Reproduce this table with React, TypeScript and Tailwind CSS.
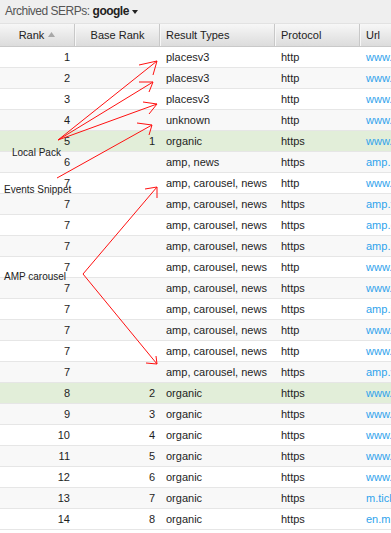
import React from "react";

type Row = {
  rank: number;
  base?: number;
  types: string;
  proto: string;
  url: string;
  hl?: boolean;
};

const AMP = "amp, carousel, news";

const rows: Row[] = [
  { rank: 1, types: "placesv3", proto: "http", url: "www.yelp.com/biz" },
  { rank: 2, types: "placesv3", proto: "http", url: "www.yelp.com/biz" },
  { rank: 3, types: "placesv3", proto: "http", url: "www.yelp.com/biz" },
  { rank: 4, types: "unknown", proto: "http", url: "www.google.com" },
  { rank: 5, base: 1, types: "organic", proto: "https", url: "www.ticketmaster.com", hl: true },
  { rank: 6, types: "amp, news", proto: "https", url: "amp.usatoday.com" },
  { rank: 7, types: AMP, proto: "http", url: "www.billboard.com" },
  { rank: 7, types: AMP, proto: "https", url: "amp.theguardian.com" },
  { rank: 7, types: AMP, proto: "https", url: "amp.cnn.com" },
  { rank: 7, types: AMP, proto: "https", url: "amp.nme.com" },
  { rank: 7, types: AMP, proto: "http", url: "www.rollingstone.com" },
  { rank: 7, types: AMP, proto: "https", url: "www.vulture.com" },
  { rank: 7, types: AMP, proto: "https", url: "amp.independent.co.uk" },
  { rank: 7, types: AMP, proto: "http", url: "www.nydailynews.com" },
  { rank: 7, types: AMP, proto: "http", url: "www.latimes.com" },
  { rank: 7, types: AMP, proto: "https", url: "amp.variety.com" },
  { rank: 8, base: 2, types: "organic", proto: "https", url: "www.livenation.com", hl: true },
  { rank: 9, base: 3, types: "organic", proto: "https", url: "www.stubhub.com" },
  { rank: 10, base: 4, types: "organic", proto: "https", url: "www.songkick.com" },
  { rank: 11, base: 5, types: "organic", proto: "https", url: "www.bandsintown.com" },
  { rank: 12, base: 6, types: "organic", proto: "https", url: "www.vividseats.com" },
  { rank: 13, base: 7, types: "organic", proto: "https", url: "m.ticketmaster.com" },
  { rank: 14, base: 8, types: "organic", proto: "https", url: "en.m.wikipedia.org" },
];

function Arrow({ from, to, h1, h2 }: { from: [number, number]; to: [number, number]; h1: [number, number]; h2: [number, number] }) {
  return (
    <g>
      <line x1={from[0]} y1={from[1]} x2={to[0]} y2={to[1]} />
      <polyline points={`${h1[0]},${h1[1]} ${to[0]},${to[1]} ${h2[0]},${h2[1]}`} />
    </g>
  );
}

export default function App() {
  return (
    <div className="relative h-[533px] w-[391px] overflow-hidden bg-white font-['Liberation_Sans',Arial,sans-serif] text-[11px] text-[#1e1e1e]">
      <div className="flex h-[24px] items-center border-b border-[#e2e2e2] bg-[#efefef] pb-[1px] pl-[5px] text-[12px] tracking-[-0.5px]">
        <span className="text-[#555]">Archived SERPs:</span>
        <span className="ml-[3px] font-bold text-[#222]">google</span>
        <span className="ml-[3px] mt-[1px] h-0 w-0 border-x-[3px] border-t-[4px] border-x-transparent border-t-[#222]" />
      </div>

      <div className="flex h-[23px] w-[480px] items-center border-b border-[#c9c9c9] bg-gradient-to-b from-[#f7f7f7] to-[#dcdcdc] text-[#222]">
        <div className="flex h-full w-[75px] items-center justify-center gap-[4px] border-r border-[#c8c8c8]">
          Rank
          <svg width="7" height="5" viewBox="0 0 7 5" className="mt-[-1px]">
            <path d="M0 5 L3.5 0 L7 5 Z" fill="#a8a8a8" />
          </svg>
        </div>
        <div className="flex h-full w-[85px] items-center justify-center border-l border-r border-l-[#f7f7f7] border-r-[#c8c8c8]">
          Base Rank
        </div>
        <div className="flex h-full w-[115px] items-center border-l border-r border-l-[#f7f7f7] border-r-[#c8c8c8] pl-[5px]">
          Result Types
        </div>
        <div className="flex h-full w-[85px] items-center border-l border-r border-l-[#f7f7f7] border-r-[#c8c8c8] pl-[5px]">
          Protocol
        </div>
        <div className="flex h-full w-[120px] items-center border-l border-l-[#f7f7f7] pl-[5px]">Url</div>
      </div>

      {rows.map((r, i) => (
        <div
          key={i}
          className={`flex h-[21px] w-[480px] items-center border-b border-[#e6e6e6] ${
            r.hl ? "bg-[#e2eed9]" : i % 2 === 1 ? "bg-[#f8f8f8]" : "bg-white"
          }`}
        >
          <div className="w-[75px] pr-[5px] text-right">{r.rank}</div>
          <div className="w-[85px] pr-[5px] text-right">{r.base ?? ""}</div>
          <div className="w-[115px] whitespace-nowrap pl-[6px]">{r.types}</div>
          <div className="w-[85px] pl-[6px]">{r.proto}</div>
          <div className="w-[120px] whitespace-nowrap pl-[6px] text-[#2fa3ec]">{r.url}</div>
        </div>
      ))}

      <svg
        className="pointer-events-none absolute left-0 top-0"
        width="391"
        height="533"
        fill="none"
        stroke="#ff1010"
        strokeWidth="1"
      >
        <Arrow from={[58, 140]} to={[157, 61]} h1={[139, 65]} h2={[153, 75]} />
        <Arrow from={[58, 140]} to={[153, 82]} h1={[139, 82]} h2={[149, 92]} />
        <Arrow from={[58, 140]} to={[157, 104]} h1={[143, 102]} h2={[149, 114]} />
        <Arrow from={[57, 178]} to={[152, 125]} h1={[137, 123]} h2={[149, 135]} />
        <Arrow from={[83, 274]} to={[157, 187]} h1={[145, 189]} h2={[157, 198]} />
        <Arrow from={[83, 274]} to={[157, 364]} h1={[146, 363]} h2={[156, 356]} />
      </svg>

      <div className="absolute left-[12px] top-[147px] text-[10px] leading-[12px] text-[#222]">Local Pack</div>
      <div className="absolute left-[4px] top-[184px] text-[10px] leading-[12px] text-[#222]">Events Snippet</div>
      <div className="absolute left-[4px] top-[271px] text-[10px] leading-[12px] text-[#222]">AMP carousel</div>
    </div>
  );
}
